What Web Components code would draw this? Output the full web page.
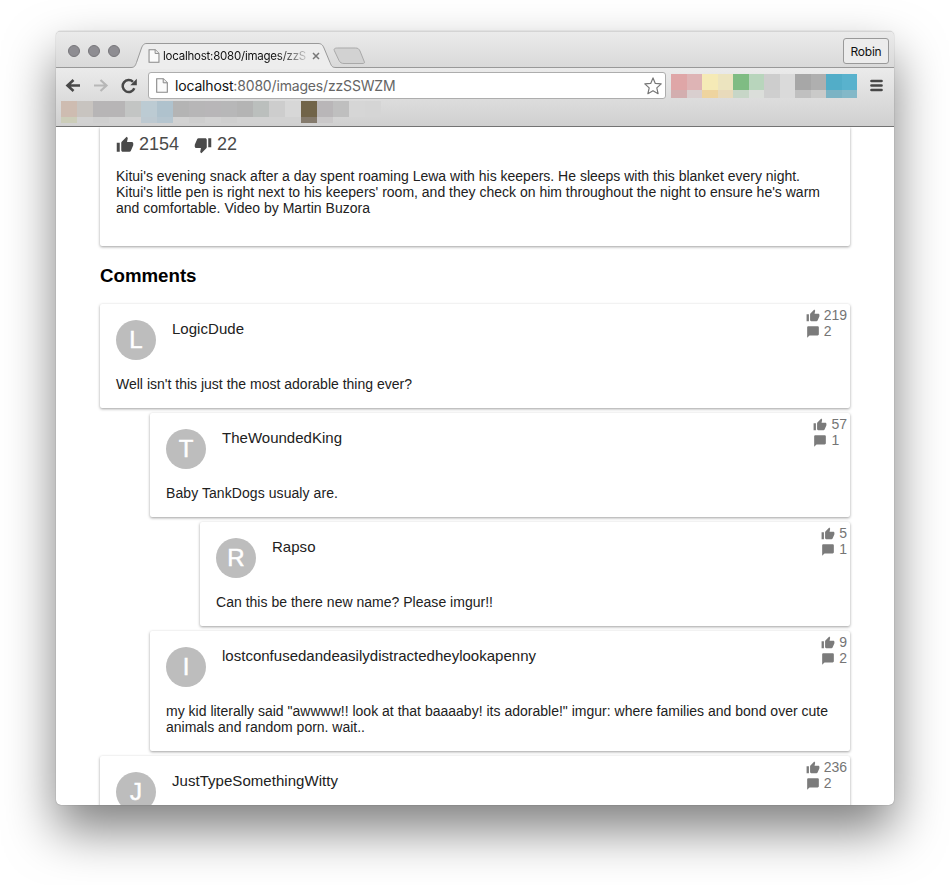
<!DOCTYPE html>
<html lang="en"><head><meta charset="utf-8"><title>localhost:8080/images/zzSSWZM</title>
<style>
html,body{margin:0;height:885px;overflow:hidden;background:#fff;font-family:"Liberation Sans",Arial,sans-serif}
body{padding:31px 0 0 56px;box-sizing:border-box}
</style></head><body>
<browser-window>
<image-details slot="page"></image-details>
<h3 slot="page" style="margin:19px 0 17px;font-size:18.72px;line-height:22px;color:#000"><fit-text w="96.5">Comments</fit-text></h3>
<user-comment slot="page" name="LogicDude" nw="72" likes="219" replies="2"><fit-text w="296">Well isn't this just the most adorable thing ever?</fit-text></user-comment>
<user-comment slot="page" depth="1" name="TheWoundedKing" nw="120" likes="57" replies="1"><fit-text w="172">Baby TankDogs usualy are.</fit-text></user-comment>
<user-comment slot="page" depth="2" name="Rapso" nw="43.5" likes="5" replies="1"><fit-text w="277">Can this be there new name? Please imgur!!</fit-text></user-comment>
<user-comment slot="page" depth="1" letter="I" name="lostconfusedandeasilydistractedheylookapenny" nw="314" likes="9" replies="2"><fit-text w="662">my kid literally said "awwww!! look at that baaaaby! its adorable!" imgur: where families and bond over cute</fit-text><br><fit-text w="199">animals and random porn. wait..</fit-text></user-comment>
<user-comment slot="page" name="JustTypeSomethingWitty" nw="166" likes="236" replies="2">&nbsp;</user-comment>
</browser-window>
<script>
const UP='<path d="M1 21h4V9H1v12zm22-11c0-1.1-.9-2-2-2h-6.31l.95-4.57.03-.32c0-.41-.17-.79-.44-1.06L14.17 1 7.59 7.59C7.22 7.95 7 8.45 7 9v10c0 1.1.9 2 2 2h9c.83 0 1.54-.5 1.84-1.22l3.02-7.05c.09-.23.14-.47.14-.73v-2z"/>';
const ICONS={
 up:UP,
 down:'<g transform="rotate(180 12 12)">'+UP+'</g>',
 chat:'<path d="M20 2H4c-1.1 0-2 .9-2 2v18l4-4h14c1.1 0 2-.9 2-2V4c0-1.1-.9-2-2-2z"/>'
};
const define=(name,html,after)=>customElements.define(name,class extends HTMLElement{
 connectedCallback(){
  if(this.shadowRoot)return;
  const r=this.attachShadow({mode:'open'});
  r.innerHTML=typeof html==='function'?html(this):html;
  if(after)after(this,r);
 }
});

define('glyph-icon',el=>`<style>:host{display:inline-block;flex:none}svg{display:block;fill:currentColor}</style>
<svg width="${el.getAttribute('size')}" height="${el.getAttribute('size')}" viewBox="0 0 24 24">${ICONS[el.getAttribute('name')]}</svg>`);

// A blurred-out strip of toolbar content: two rows of flat cells.
define('pixel-strip',el=>{
 const h=el.getAttribute('rows').split(',').map(Number);
 const rows=[el.getAttribute('a'),el.getAttribute('b')].map(s=>s.trim().split(/\s+/));
 return `<style>:host{display:block}.r{display:flex}i{width:16px}</style>`+
 rows.map((c,k)=>`<div class="r">${c.map(v=>`<i style="height:${h[k]}px;background:${v==='-'?'transparent':'#'+v}"></i>`).join('')}</div>`).join('');
});

define('image-details',`<style>
:host{display:block;box-sizing:border-box;height:119px;padding:7px 16px;background:#fff;border-radius:0 0 2px 2px;box-shadow:0 1px 3px rgba(0,0,0,.38)}
.s{display:flex;align-items:center;font-size:18px;line-height:20px;color:#4a4a4a}
.s glyph-icon{margin-right:5px;position:relative;top:1px}.s glyph-icon+span+glyph-icon{margin-left:15px}
p{margin:14px 0 0;font-size:14px;line-height:16px;color:#212121}
</style>
<div class="s"><glyph-icon name="up" size="18"></glyph-icon><span>2154</span><glyph-icon name="down" size="18"></glyph-icon><span>22</span></div>
<p><fit-text w="684">Kitui's evening snack after a day spent roaming Lewa with his keepers. He sleeps with this blanket every night.</fit-text><br><fit-text w="704">Kitui's little pen is right next to his keepers' room, and they check on him throughout the night to ensure he's warm</fit-text><br><fit-text w="254">and comfortable. Video by Martin Buzora</fit-text></p>`);

define('user-comment',el=>{const a=n=>el.getAttribute(n);return `<style>
:host{display:grid;grid-template-columns:40px 1fr auto;column-gap:16px;box-sizing:border-box;padding:16px 3px 16px 16px;margin:0 0 5px ${50*(a('depth')||0)}px;background:#fff;border-radius:2px;box-shadow:0 1px 3px rgba(0,0,0,.38);color:#212121}
.av{width:40px;height:40px;border-radius:50%;background:#bdbdbd;color:#fff;font-size:24px;line-height:40px;text-align:center;-webkit-text-stroke:.5px #fff}
.n{font-size:15px;line-height:18px}
.st{margin-top:-13px;height:32px;font-size:14px;line-height:16px;color:#757575}
.st div{display:flex;align-items:center;gap:4px}
.st glyph-icon{margin-top:2px;color:#7b7b7b}
.st div{height:16px}
.b{grid-column:1/-1;margin-top:16px;font-size:14px;line-height:16px}
</style><div class="av">${a('letter')||a('name')[0]}</div><div class="n"><fit-text w="${a('nw')}">${a('name')}</fit-text></div>
<div class="st"><div><glyph-icon name="up" size="14"></glyph-icon><span>${a('likes')}</span></div><div><glyph-icon name="chat" size="14"></glyph-icon><span>${a('replies')}</span></div></div>
<div class="b"><slot></slot></div>`});

const PAGE=(w,h)=>`<svg width="${w}" height="${h}" viewBox="0 0 12 15"><path d="M.7.7h6.6l4 4v9.6H.7z" fill="#fbfbfb" stroke="#888" stroke-width="1.1"/><path d="M7.2.8v4h4" fill="#eee" stroke="#888" stroke-width="1"/></svg>`;

define('browser-tab',`<style>
:host{display:flex;align-items:center;position:relative;width:234px;height:25px;box-sizing:border-box;padding:1px 0 0 17px;font:11.5px/16px Inter,sans-serif;color:#111}
.bg{position:absolute;left:0;top:0}
.t{position:relative;margin-left:3px;width:145px;white-space:nowrap;-webkit-mask-image:linear-gradient(90deg,#000 115px,rgba(0,0,0,.15) 144px)}
.p,.x{position:relative;display:block}.x{margin-left:4px}svg{display:block}
</style><svg class="bg" width="240" height="26"><path d="M0 24.5C4 24.5 4.5 22 5.500 19.500L10.500 5C12 1.500 13 .5 16 .5H187C190 .5 191.500 1.500 193 5L199 19.500C200.500 23 201 24.500 205 24.500V26H0z" fill="#ededed"/><path d="M0 24.5C4 24.5 4.5 22 5.500 19.500L10.500 5C12 1.500 13 .5 16 .5H187C190 .5 191.500 1.500 193 5L199 19.500C200.500 23 201 24.500 205 24.500" fill="none" stroke="#999"/><path d="M206.500 5H224.500C227 5 228 6 229 8L233 18C234 20 233.500 20.500 231 20.500H213C210.500 20.500 209 19.500 208 17.500L203.500 8C202.500 6 203.500 5 206.500 5z" fill="#d2d2d2" stroke="#a9a9a9"/></svg>
<span class="p">${PAGE(12,14)}</span><span class="t"><fit-text w="143">localhost:8080/images/zzS</fit-text></span><svg class="x" width="8" height="8"><path d="M1 1l6 6M7 1L1 7" stroke="#777" stroke-width="1.5"/></svg>`);

define('browser-window',`<style>
:host{display:flex;flex-direction:column;width:838px;height:774px;border-radius:5px;overflow:hidden;background:#fff;box-shadow:0 0 1px rgba(0,0,0,.5),0 25px 50px rgba(0,0,0,.5)}
header{flex:none;height:96px;box-sizing:border-box;border-bottom:1px solid #737373;background:#d3d3d3}
.title{display:flex;height:37px;box-sizing:border-box;padding-left:12px;border-bottom:1px solid #999;border-top:1px solid #d4d4d4;background:linear-gradient(#ebebeb,#d9d9d9)}
.dots{display:flex;gap:8px;padding-top:13px;width:63px;flex:none}
.dots i{width:12px;height:12px;box-sizing:border-box;border-radius:50%;background:#8e8d92;border:1px solid #77767a}
browser-tab{margin-top:11px;flex:none}
.user{margin:6px 5px 0 auto;width:46px;height:26px;box-sizing:border-box;border:1px solid #999;border-radius:3px;background:#ececec;font:12px/26px Inter,sans-serif;text-align:center;color:#111;white-space:nowrap}
.bars{height:58px;background:linear-gradient(#ebebeb,#d0d0d0);padding-top:4px;box-sizing:border-box}
.nav{display:flex;height:27px;align-items:center}
.nav svg{display:block;flex:none}
.url{display:flex;align-items:center;width:518px;height:27px;box-sizing:border-box;margin-left:10px;padding:0 3px 0 7px;border:1px solid #adadad;border-radius:3px;background:#fff;font:14px/20px Inter,sans-serif;color:#656565}
.url b{font-weight:400;color:#111}.url fit-text{margin-left:7px}
.star{margin-left:auto}
.nav pixel-strip{margin:0 0 0 5px}
main{flex:1;min-height:0;overflow:hidden;padding:0 44px}
</style>
<header><div class="title"><div class="dots"><i></i><i></i><i></i></div><browser-tab></browser-tab><div class="user"><fit-text w="31">Robin</fit-text></div></div>
<div class="bars"><div class="nav">
<svg style="margin-left:9px" width="16" height="14"><path d="M15 6.500H3M8.500 1L2.500 6.500L8.500 12" fill="none" stroke="#484848" stroke-width="2.600"/></svg>
<svg style="margin-left:12px" width="16" height="14"><path d="M1 6.500H13M7.500 1L13.500 6.500L7.500 12" fill="none" stroke="#b7b7b7" stroke-width="2.200"/></svg>
<svg style="margin-left:12px" width="17" height="16"><path d="M13.300 10.300A6 6 0 1 1 12 3.800" fill="none" stroke="#484848" stroke-width="2.500"/><path d="M15.800 .8V7.300H9.300z" fill="#484848"/></svg>
<div class="url">${PAGE(12,15)}<fit-text w="220.500"><b>localhost</b>:8080/images/zzSSWZM</fit-text>
<svg class="star" width="18" height="18"><path d="M9 .9L11.300 6.400L17.200 6.900L12.800 10.900L14.100 16.700L9 13.700L3.900 16.700L5.200 10.900L.8 6.900L6.700 6.400z" fill="#fff" stroke="#777" stroke-width="1.200" stroke-linejoin="round"/></svg></div>
<pixel-strip rows="16,8" a="dfa6a7 deb4b5 f5eab6 ece4bf 7fbc83 b8d5bc cdcdcd dadada a7a7a7 afafaf 52adc8 59b2cd" b="d3aeaf d9cfcf eed49f e8dabb c7d6c7 dbdeda cfcfcf dadada c0c0c0 cacac9 7bb3c4 83b8c8" style="width:186px;overflow:hidden"></pixel-strip>
<svg style="margin-left:13px" width="14" height="14"><path d="M1.500 2H11.500M1.500 6.500H11.500M1.500 11H11.500" stroke="#474747" stroke-width="2.700" stroke-linecap="round"/></svg>
</div><pixel-strip style="margin:2px 0 0 5.300px" rows="16,6" a="cebcb1 c8c4c0 b7b5b6 b7b5b6 c3c5c4 bccbd3 afc2cd b4b4b4 b7b6b7 b8b6b8 b7b7b8 b4b4b4 bbbfbd cdcdcd d7d7d7 716449 b9b6b8 bfbfbf d6d6d6 d5d5d5" b="cccdb9 d2d2d2 cfcfcf d2d2d2 d2d2d2 bdc9d1 b5c5cf d2d2d2 cecece d2d2d2 cfcfcf d2d2d2 d2d2d2 d2d2d2 d2d2d2 847a6c cac8c9 - - -"></pixel-strip></div></header>
<main><slot name="page"></slot></main>`);

// Spreads a line of text over exactly `w` pixels; defined last so that it measures in its parents' final fonts.
define('fit-text','<style>:host{display:inline-block;white-space:nowrap}</style><span><slot></slot></span>',(el,r)=>{
 const s=r.querySelector('span'),n=el.textContent.length;
 const nat=s.getBoundingClientRect().width;
 if(nat)s.style.letterSpacing=((+el.getAttribute('w')-nat)/n)+'px';
});
</script></body></html>
